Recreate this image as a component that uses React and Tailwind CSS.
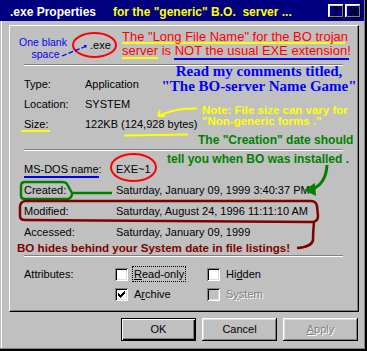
const sunken =
  "shadow-[inset_1px_1px_0_#808080,inset_-1px_-1px_0_#fff,inset_2px_2px_0_#000,inset_-2px_-2px_0_#dfdfdf]";
const raised =
  "shadow-[inset_-1px_-1px_0_#000,inset_1px_1px_0_#fff,inset_-2px_-2px_0_#808080,inset_2px_2px_0_#dfdfdf]";

function Check({ checked, disabled }) {
  return (
    <span
      className={`relative block w-[13px] h-[13px] shrink-0 ${disabled ? "bg-[#c0c0c0]" : "bg-white"} ${sunken}`}
    >
      {checked && (
        <svg width="13" height="13" viewBox="0 0 13 13" className="absolute inset-0" shapeRendering="crispEdges">
          <rect x="3" y="5" width="1" height="3" fill="#000" />
          <rect x="4" y="6" width="1" height="3" fill="#000" />
          <rect x="5" y="7" width="1" height="3" fill="#000" />
          <rect x="6" y="6" width="1" height="3" fill="#000" />
          <rect x="7" y="5" width="1" height="3" fill="#000" />
          <rect x="8" y="4" width="1" height="3" fill="#000" />
          <rect x="9" y="3" width="1" height="3" fill="#000" />
        </svg>
      )}
    </span>
  );
}

function Attr({ checked, disabled, focus, children }) {
  return (
    <div className="w-[92px] flex items-center">
      <Check checked={checked} disabled={disabled} />
      <span
        className={`ml-[4px] px-[1px] leading-[14px] border border-dotted ${focus ? "border-black" : "border-transparent"} ${disabled ? "text-[#808080] [text-shadow:1px_1px_0_#fff]" : ""}`}
      >
        {children}
      </span>
    </div>
  );
}

function Sep({ className }) {
  return (
    <div className={`ml-[14px] w-[319px] ${className}`}>
      <div className="h-px bg-[#808080]" />
      <div className="h-px bg-white" />
    </div>
  );
}

function Row({ label, value, labelW, h }) {
  return (
    <div className={`flex items-center pl-[14px] leading-none ${h}`}>
      <span className={labelW}>{label}</span>
      <span className="whitespace-nowrap">{value}</span>
    </div>
  );
}

function Btn({ children, isDefault, disabled }) {
  return (
    <div
      className={`w-[75px] h-[23px] flex items-center justify-center ${isDefault ? "border border-black shadow-[inset_1px_1px_0_#fff,inset_-1px_-1px_0_#000,inset_-2px_-2px_0_#808080]" : raised} ${disabled ? "text-[#808080] [text-shadow:1px_1px_0_#fff]" : ""}`}
    >
      {children}
    </div>
  );
}

export default function App() {
  return (
    <div className="relative w-[367px] h-[351px] bg-black overflow-hidden font-['Liberation_Sans',Arial,sans-serif] text-[11px] text-black">
      <div className="w-[365px] h-[349px] bg-[#808080]">
        <div className="w-[364px] h-[348px] bg-[#c0c0c0] flex flex-col">
          {/* title bar */}
          <div className="h-[21px] shrink-0 bg-[#000080] flex items-start pl-[10px] pr-[3px]">
            <span className="mt-[6px] w-[103px] text-[12px] font-bold leading-none text-white whitespace-nowrap">
              .exe Properties
            </span>
            <span className="mt-[6px] text-[12px] font-bold leading-none text-[#ffff00] whitespace-nowrap">
              {'for the "generic" B.O.\u00a0 server ...'}
            </span>
            <div className="ml-auto mt-[4px] flex gap-px">
              <div className={`w-[16px] h-[14px] flex items-center justify-center text-[12px] font-bold leading-none ${raised}`}>
                ?
              </div>
              <div className={`w-[16px] h-[14px] flex items-center justify-center ${raised}`}>
                <svg width="9" height="9" viewBox="0 0 9 9">
                  <path d="M1 1 L8 8 M8 1 L1 8" stroke="#000" strokeWidth="1.8" />
                </svg>
              </div>
            </div>
          </div>

          {/* body */}
          <div className="flex-1 ml-px border-l border-white flex flex-col">
            <div className="ml-[7px] mt-[4px] w-[350px] h-[287px] border border-t-white border-l-white border-r-black border-b-black shadow-[inset_-1px_-1px_0_#808080] flex flex-col">
              <div className="h-[38px] flex items-center pl-[80px] leading-none">.exe</div>
              <Sep />
              <div className="mt-[8px]">
                <Row label="Type:" value="Application" labelW="w-[61px]" h="h-[20px]" />
                <Row label="Location:" value="SYSTEM" labelW="w-[61px]" h="h-[20px]" />
                <Row label="Size:" value="122KB (124,928 bytes)" labelW="w-[61px]" h="h-[20px]" />
              </div>
              <Sep className="mt-[15px]" />
              <div className="mt-[8px]">
                <Row label="MS-DOS name:" value="EXE~1" labelW="w-[92px]" h="h-[21px]" />
                <Row label="Created:" value="Saturday, January 09, 1999 3:40:37 PM" labelW="w-[92px]" h="h-[21px]" />
                <Row label="Modified:" value="Saturday, August 24, 1996 11:11:10 AM" labelW="w-[92px]" h="h-[21px]" />
                <Row label="Accessed:" value="Saturday, January 09, 1999" labelW="w-[92px]" h="h-[21px]" />
              </div>
              <Sep className="mt-[12px]" />
              <div className="mt-[7px] pl-[14px] leading-none">
                <div className="h-[20px] flex items-center">
                  <span className="w-[91px]">Attributes:</span>
                  <Attr focus>
                    <span className="underline underline-offset-1">R</span>ead-only
                  </Attr>
                  <Attr>
                    Hi<span className="underline underline-offset-1">d</span>den
                  </Attr>
                </div>
                <div className="h-[20px] flex items-center">
                  <span className="w-[91px]" />
                  <Attr checked>
                    A<span className="underline underline-offset-1">r</span>chive
                  </Attr>
                  <Attr disabled>
                    S<span className="underline underline-offset-1">y</span>stem
                  </Attr>
                </div>
              </div>
            </div>

            <div className="mt-[6px] pl-[119px] flex gap-[6px]">
              <Btn isDefault>OK</Btn>
              <Btn>Cancel</Btn>
              <Btn disabled>
                <span>
                  <span className="underline underline-offset-1">A</span>pply
                </span>
              </Btn>
            </div>
          </div>
        </div>
      </div>

      {/* annotations drawn over the dialog */}
      <svg className="absolute inset-0 pointer-events-none" width="367" height="351" viewBox="0 0 367 351">
        <ellipse cx="94.5" cy="45" rx="21.5" ry="12" fill="none" stroke="#ff0000" strokeWidth="2" />
        <path d="M62 56 L84 47" stroke="#0000ff" strokeWidth="1.3" strokeDasharray="5 2" />
        <rect x="84" y="45" width="2.5" height="2.5" fill="#0000ff" />
        <rect x="122" y="42" width="223" height="2" fill="#ffff00" />
        <rect x="122" y="57" width="36" height="2" fill="#ffff00" />
        <rect x="174" y="58" width="175" height="2" fill="#0000ff" />
        <rect x="21" y="130" width="29" height="2" fill="#ffff00" />
        <path d="M124 135.5 L188 134.5" stroke="#ffff00" strokeWidth="2" />
        <path d="M197 108.5 L184 109 Q172 110 158 116 M158 116 L160 110 M158 116 L165 116" fill="none" stroke="#ffff00" strokeWidth="2" />
        <ellipse cx="133.5" cy="167.5" rx="22.5" ry="13.5" fill="none" stroke="#ff0000" strokeWidth="2" />
        <rect x="24" y="176" width="75" height="2" fill="#0000ff" />
        <path
          d="M72 193 L67 184 Q66 182 62 182 L25 182 Q21 182 21 186 L21 196 Q21 199 25 199 L68 199 Q72 198 72 193 L112 193"
          fill="none"
          stroke="#008000"
          strokeWidth="2.5"
        />
        <path d="M327 165 Q326 183 313 189" fill="none" stroke="#008000" strokeWidth="3" />
        <polygon points="304,190 315,183 316,196" fill="#008000" />
        <path
          d="M25 201 Q20 202 20 207 L20 216 Q20 220 25 220 L313 222 Q318 221 318 216 L317 206 Q316 201 311 201 Z"
          fill="none"
          stroke="#800000"
          strokeWidth="2.5"
        />
        <path d="M314 222 Q313 232 313 240 Q312 247 297 248" fill="none" stroke="#800000" strokeWidth="2.5" />
      </svg>

      <div className="absolute left-[16px] top-[37px] w-[54px] text-center text-[10.5px] leading-[11.75px] text-[#0000ff] whitespace-nowrap">
        <div>One blank</div>
        <div className="pl-[5px]">space</div>
      </div>
      <div className="absolute left-[122px] top-[29.5px] text-[13px] leading-[14px] text-[#ff0000] whitespace-nowrap">
        <div>The "Long File Name" for the BO trojan</div>
        <div>server is NOT the usual EXE extension!</div>
      </div>
      <div className="absolute left-[149px] top-[64px] w-[220px] text-center font-['Liberation_Serif','Times_New_Roman',serif] font-bold text-[15px] leading-[15px] text-[#0000ff] whitespace-nowrap">
        <div>Read my comments titled,</div>
        <div>"The BO-server Name Game"</div>
      </div>
      <div className="absolute left-[202px] top-[104.5px] text-[11.5px] font-bold leading-[11px] text-[#ffff00] whitespace-nowrap">
        <div>Note: File size can vary for</div>
        <div>"Non-generic forms ."</div>
      </div>
      <div className="absolute left-[198px] top-[134px] text-[12px] font-bold leading-none text-[#008000] whitespace-nowrap">
        The "Creation" date should
      </div>
      <div className="absolute left-[167px] top-[152.5px] text-[12px] font-bold leading-none text-[#008000] whitespace-nowrap">
        tell you when BO was installed .
      </div>
      <div className="absolute left-[17px] top-[242px] text-[11.6px] font-bold leading-none text-[#800000] whitespace-nowrap">
        BO hides behind your System date in file listings!
      </div>
    </div>
  );
}
